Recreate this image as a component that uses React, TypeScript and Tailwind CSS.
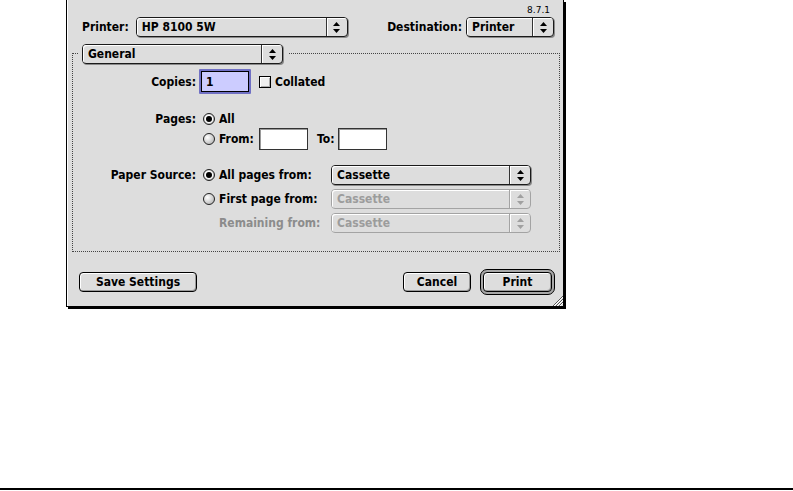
import React from "react"

// Mac OS 9 style print dialog (Platinum look)

function Arrows({ disabled }: { disabled?: boolean }) {
  return (
    <svg width="7" height="11" viewBox="0 0 7 11">
      <path d="M3.5 0L7 4H0z M0 7h7L3.5 11z" fill={disabled ? "#a0a0a0" : "#000"} />
    </svg>
  )
}

function Popup({ label, className, disabled }: { label: string; className: string; disabled?: boolean }) {
  return (
    <div
      className={`flex h-[20px] shrink-0 rounded-[4px] border bg-[#dddddd] ${
        disabled ? "border-[#a3a3a3] text-[#9c9c9c]" : "border-[#1a1a1a] text-black shadow-[1px_1px_0_#8a8a8a]"
      } ${className}`}
    >
      <div className="flex flex-1 items-center rounded-l-[3px] pl-[5px] shadow-[inset_1px_1px_0_#fff]">{label}</div>
      <div
        className={`flex w-[21px] items-center justify-center rounded-r-[3px] border-l shadow-[inset_1px_1px_0_#fff] ${
          disabled ? "border-[#a3a3a3]" : "border-[#333]"
        }`}
      >
        <Arrows disabled={disabled} />
      </div>
    </div>
  )
}

function Radio({ on }: { on?: boolean }) {
  return (
    <div className="flex h-[12px] w-[12px] shrink-0 items-center justify-center rounded-full border border-[#222] bg-[radial-gradient(circle_at_35%_35%,#ffffff,#a8a8a8)]">
      {on && <div className="h-[6px] w-[6px] rounded-full bg-black shadow-[0_0_0_1px_#fff]" />}
    </div>
  )
}

function TextBox({ className }: { className: string }) {
  return <div className={`shrink-0 border border-[#333] bg-white shadow-[inset_1px_1px_0_#9a9a9a] ${className}`} />
}

function Button({ label, className }: { label: string; className: string }) {
  return (
    <div
      className={`flex h-[20px] shrink-0 items-center justify-center rounded-[4px] border border-black bg-[#dddddd] shadow-[inset_1px_1px_0_#fff,inset_-1px_-1px_0_#9a9a9a] ${className}`}
    >
      {label}
    </div>
  )
}

export default function App() {
  return (
    <div className="flex h-[491px] w-[793px] flex-col bg-white font-['DejaVu_Sans_Condensed','DejaVu_Sans',sans-serif] text-[12px] font-bold leading-none text-black">
      {/* Window */}
      <div className="ml-[66px] flex h-[307px] w-[498px] flex-col border-x border-b border-black bg-[#dddddd] shadow-[2px_2px_0_#000,inset_1px_0_0_#fff]">
        {/* version */}
        <div className="flex h-[17px] justify-end pr-[13px] pt-[6px]">
          <span className="font-['DejaVu_Sans',sans-serif] text-[9px] font-normal leading-[9px]">8.7.1</span>
        </div>

        {/* Printer / Destination */}
        <div className="flex h-[20px] items-center pl-[15px] pr-[9px]">
          <span>Printer:</span>
          <Popup label="HP 8100 5W" className="ml-[7px] w-[212px]" />
          <div className="ml-auto flex items-center">
            <span>Destination:</span>
            <Popup label="Printer" className="ml-[4px] w-[88px]" />
          </div>
        </div>

        {/* Group box */}
        <div className="relative ml-[5px] mt-[16px] h-[199px] w-[488px] border border-dotted border-[#444] pt-[15px]">
          <div className="absolute left-[5px] top-[-10px] bg-[#dddddd] pl-[4px] pr-[6px]">
            <Popup label="General" className="w-[201px]" />
          </div>

          {/* Copies */}
          <div className="flex h-[25px] items-center">
            <span className="w-[123px] text-right">Copies:</span>
            <div className="ml-[3px] h-[25px] w-[52px] shrink-0 rounded-[1px] bg-[#7070c4] p-[2px]">
              <div className="flex h-full items-center border border-black bg-[#ccccff] pl-[4px]">1</div>
            </div>
            <div className="ml-[8px] h-[12px] w-[12px] border border-black bg-[#eeeeee] shadow-[inset_1px_1px_0_#fff,inset_-1px_-1px_0_#aaaaaa]" />
            <span className="ml-[4px]">Collated</span>
          </div>

          {/* Pages */}
          <div className="mt-[16px] flex h-[18px] items-center">
            <span className="w-[123px] text-right">Pages:</span>
            <div className="ml-[7px]">
              <Radio on />
            </div>
            <span className="ml-[4px]">All</span>
          </div>
          <div className="flex h-[22px] items-center">
            <span className="w-[123px]" />
            <div className="ml-[7px]">
              <Radio />
            </div>
            <span className="ml-[4px] w-[40px]">From:</span>
            <TextBox className="h-[22px] w-[49px]" />
            <span className="ml-[9px] w-[21px]">To:</span>
            <TextBox className="h-[22px] w-[49px]" />
          </div>

          {/* Paper Source */}
          <div className="mt-[15px] flex h-[20px] items-center">
            <span className="w-[123px] text-right">Paper Source:</span>
            <div className="ml-[7px]">
              <Radio on />
            </div>
            <span className="ml-[4px] w-[112px]">All pages from:</span>
            <Popup label="Cassette" className="w-[200px]" />
          </div>
          <div className="mt-[4px] flex h-[20px] items-center">
            <span className="w-[123px]" />
            <div className="ml-[7px]">
              <Radio />
            </div>
            <span className="ml-[4px] w-[112px]">First page from:</span>
            <Popup label="Cassette" className="w-[200px]" disabled />
          </div>
          <div className="mt-[4px] flex h-[20px] items-center">
            <span className="w-[123px]" />
            <span className="ml-[23px] w-[112px] text-[#8c8c8c]">Remaining from:</span>
            <Popup label="Cassette" className="w-[200px]" disabled />
          </div>
        </div>

        {/* Buttons */}
        <div className="mt-[17px] flex h-[26px] items-center pl-[12px] pr-[8px]">
          <Button label="Save Settings" className="w-[118px]" />
          <Button label="Cancel" className="ml-auto w-[68px]" />
          <div className="ml-[9px] flex h-[26px] w-[75px] rounded-[7px] border border-black bg-[#a8a8a8] p-[2px]">
            <Button label="Print" className="h-full w-full" />
          </div>
        </div>

        {/* grow box */}
        <div className="flex h-[11px] justify-end">
          <svg width="11" height="11" viewBox="0 0 11 11">
            <path d="M11 1L1 11M11 4L4 11M11 7L7 11" stroke="#555" strokeWidth="1" />
            <path d="M11 2L2 11M11 5L5 11M11 8L8 11" stroke="#fff" strokeWidth="1" />
          </svg>
        </div>
      </div>

      {/* bottom rule */}
      <div className="mt-auto mb-[1px] h-[2px] w-full bg-black" />
    </div>
  )
}
